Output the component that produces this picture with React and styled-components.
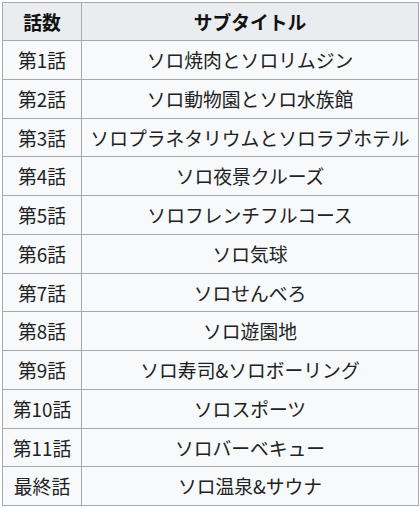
import React from 'react';
import styled, { createGlobalStyle } from 'styled-components';

const GlobalStyle = createGlobalStyle`
  html, body {
    margin: 0;
    padding: 0;
    background: #ffffff;
  }
  body {
    font-family: 'Noto Sans CJK JP', 'Noto Sans', sans-serif;
    color: #202122;
  }
`;

const Page = styled.div`
  padding: 2px 0 0 2px;
`;

const Table = styled.table`
  border-collapse: collapse;
  background-color: #f8f9fa;
  border: 1px solid #a2a9b1;
  font-size: 18.8px;
  table-layout: fixed;
  width: 415px;
`;

const HeadCell = styled.th`
  background-color: #eaecf0;
  border: 1px solid #a2a9b1;
  font-weight: 700;
  color: #111;
  text-align: center;
  padding: 4px 0;
  line-height: 29px;
  width: ${(p) => p.$width}px;
`;

const Cell = styled.td`
  border: 1px solid #a2a9b1;
  text-align: center;
  padding: 4px 0;
  line-height: 29.75px;
  white-space: nowrap;
`;

const episodes = [
  ['第1話', 'ソロ焼肉とソロリムジン'],
  ['第2話', 'ソロ動物園とソロ水族館'],
  ['第3話', 'ソロプラネタリウムとソロラブホテル'],
  ['第4話', 'ソロ夜景クルーズ'],
  ['第5話', 'ソロフレンチフルコース'],
  ['第6話', 'ソロ気球'],
  ['第7話', 'ソロせんべろ'],
  ['第8話', 'ソロ遊園地'],
  ['第9話', 'ソロ寿司&ソロボーリング'],
  ['第10話', 'ソロスポーツ'],
  ['第11話', 'ソロバーベキュー'],
  ['最終話', 'ソロ温泉&サウナ'],
];

const App = () => {
  return (
    <Page>
      <GlobalStyle />
      <Table>
        <thead>
          <tr>
            <HeadCell $width={78}>話数</HeadCell>
            <HeadCell $width={336}>サブタイトル</HeadCell>
          </tr>
        </thead>
        <tbody>
          {episodes.map(([no, title]) => (
            <tr key={no}>
              <Cell>{no}</Cell>
              <Cell>{title}</Cell>
            </tr>
          ))}
        </tbody>
      </Table>
    </Page>
  );
};

export default App;
